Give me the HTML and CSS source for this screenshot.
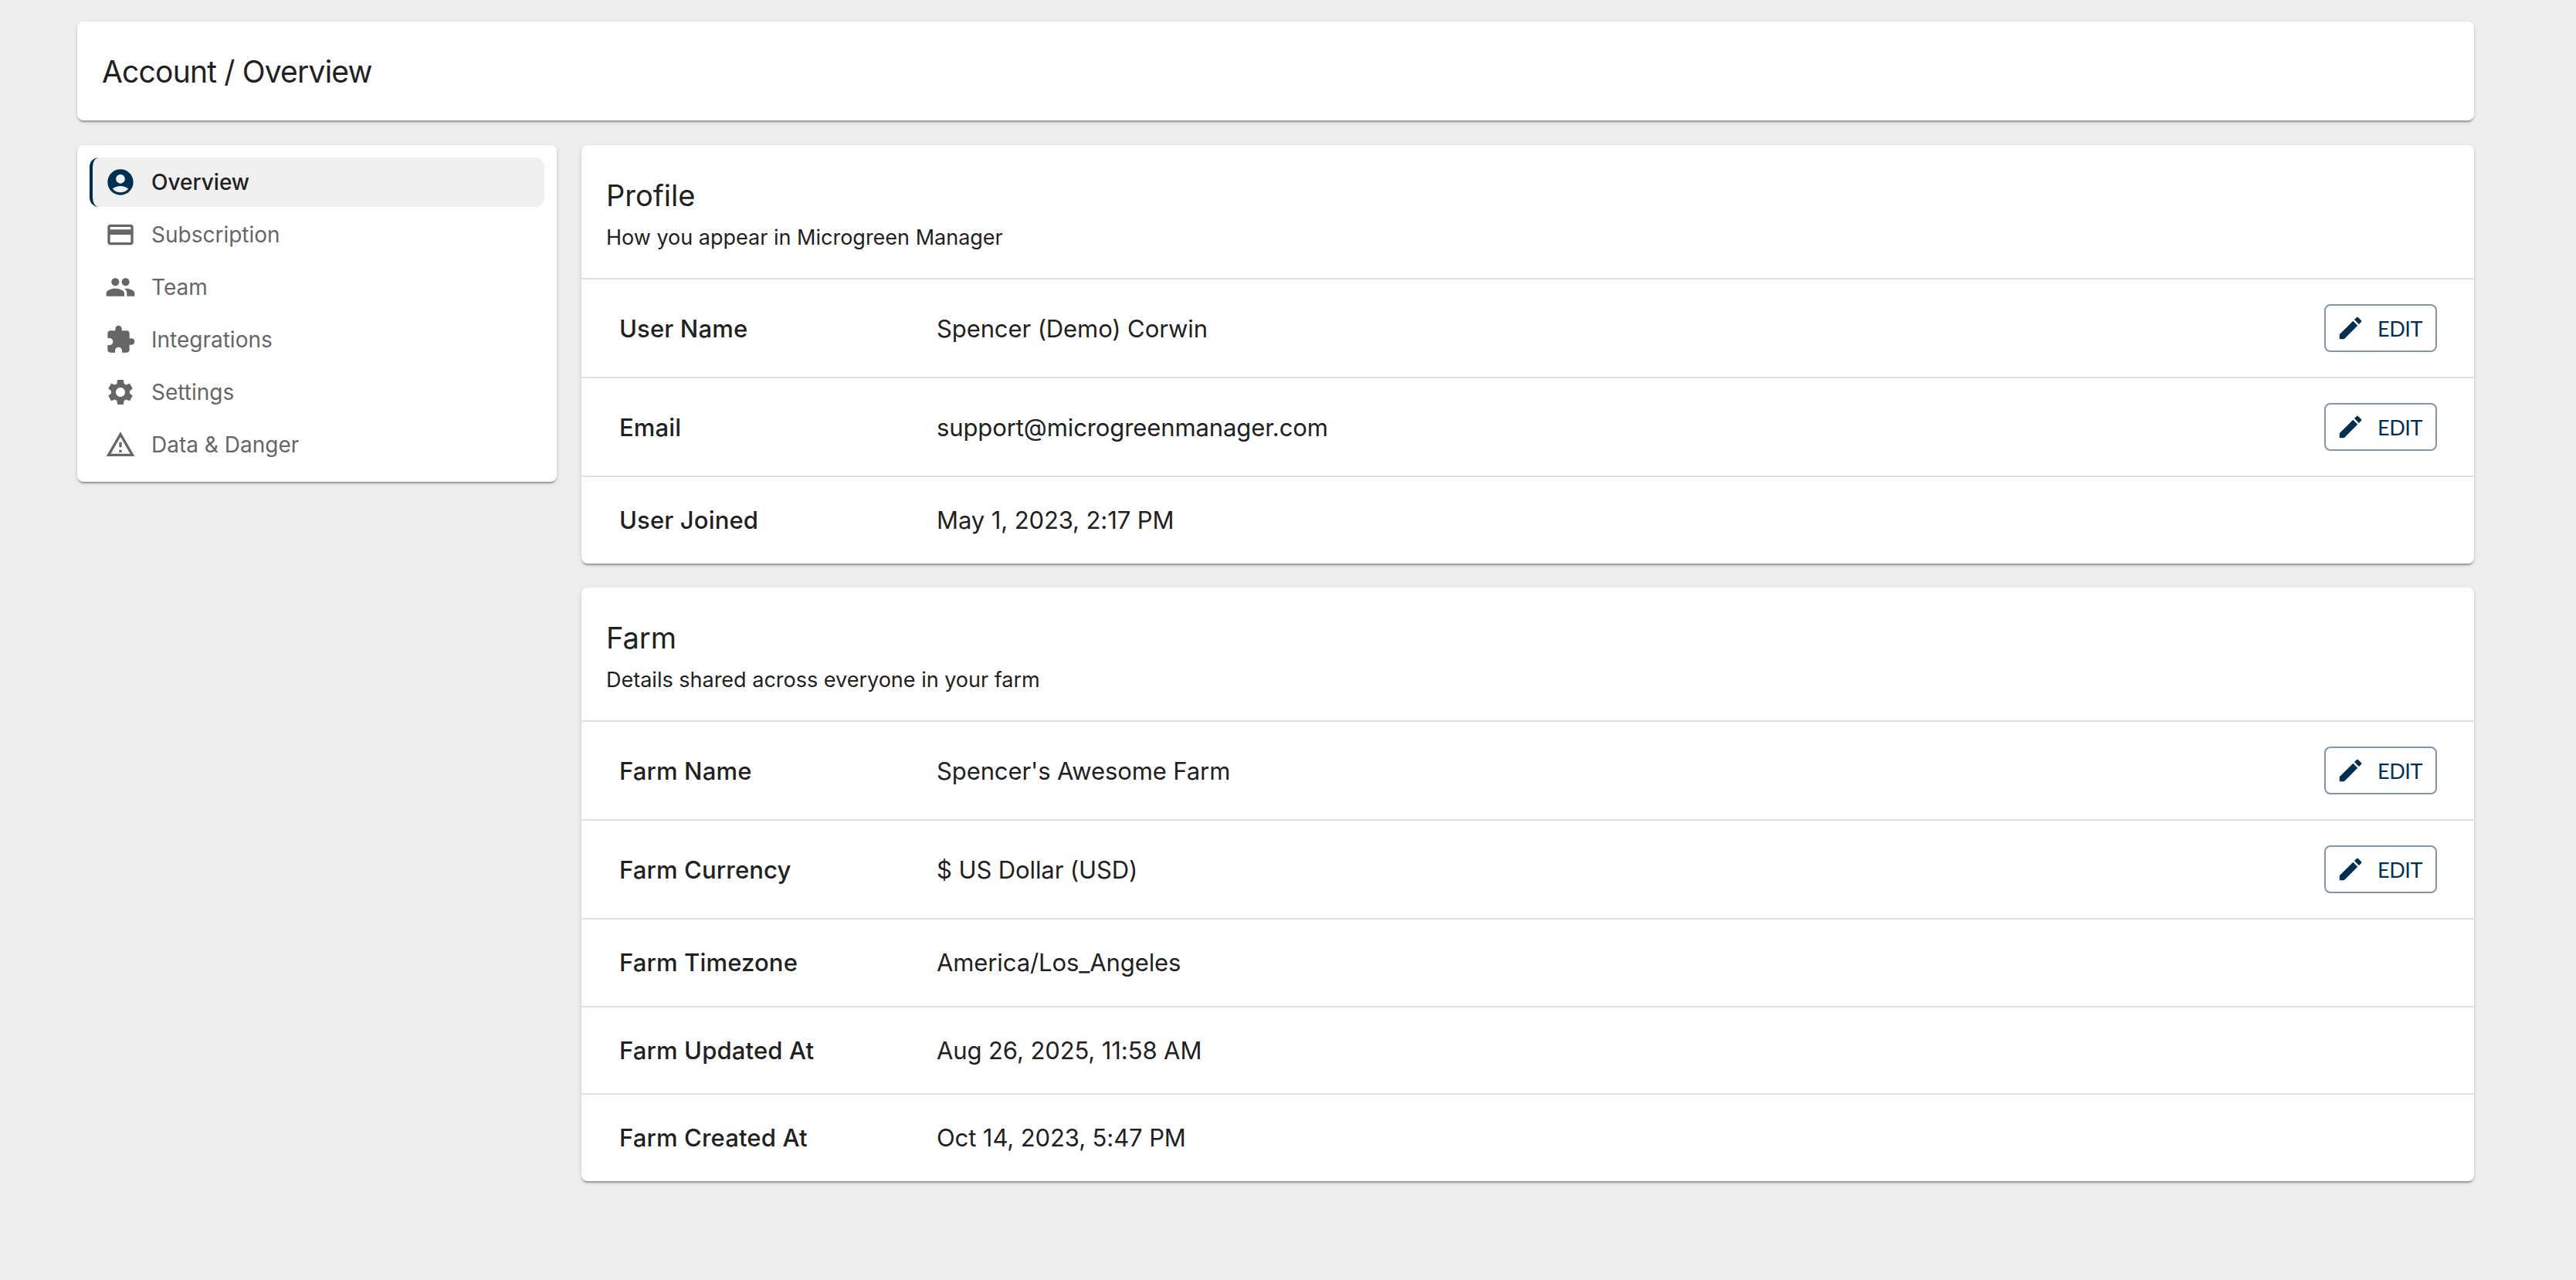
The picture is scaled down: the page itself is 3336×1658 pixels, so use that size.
FILE: index.html
```html
<!DOCTYPE html>
<html lang="en">
  <head>
    <meta charset="UTF-8" />
    <title>Account / Overview</title>
    <link rel="stylesheet" href="styles.css">
  </head>

  <body>
    <svg class="iconDefs" width="0" height="0">
      <symbol id="editIcon" viewBox="0 0 24 24">
        <path d="M3 17.25V21h3.75L17.81 9.94l-3.75-3.75L3 17.25zM20.71 7.04c.39-.39.39-1.02 0-1.41l-2.34-2.34c-.39-.39-1.02-.39-1.41 0l-1.83 1.83 3.75 3.75 1.83-1.83z" />
      </symbol>
    </svg>

    <header class="card pageTitle">Account / Overview</header>

    <div class="columns">
      <nav class="card sideNav">
        <a class="navItem active" href="javascript:;">
          <svg class="navIcon" viewBox="0 0 24 24"><path d="M12 2C6.48 2 2 6.48 2 12s4.48 10 10 10 10-4.48 10-10S17.52 2 12 2zm0 4c1.93 0 3.5 1.57 3.5 3.5S13.93 13 12 13s-3.5-1.57-3.5-3.5S10.07 6 12 6zm0 14c-2.03 0-4.43-.82-6.14-2.88C7.55 15.8 9.68 15 12 15s4.45.8 6.14 2.12C16.43 19.18 14.03 20 12 20z" /></svg>
          Overview
        </a>
        <a class="navItem" href="javascript:;">
          <svg class="navIcon" viewBox="0 0 24 24"><path d="M20 4H4c-1.11 0-1.99.89-1.99 2L2 18c0 1.11.89 2 2 2h16c1.11 0 2-.89 2-2V6c0-1.11-.89-2-2-2zm0 14H4v-6h16v6zm0-10H4V6h16v2z" /></svg>
          Subscription
        </a>
        <a class="navItem" href="javascript:;">
          <svg class="navIcon" viewBox="0 0 24 24"><path d="M16 11c1.66 0 2.99-1.34 2.99-3S17.66 5 16 5c-1.66 0-3 1.34-3 3s1.34 3 3 3zm-8 0c1.66 0 2.99-1.34 2.99-3S9.66 5 8 5C6.34 5 5 6.34 5 8s1.34 3 3 3zm0 2c-2.33 0-7 1.17-7 3.5V19h14v-2.5c0-2.33-4.67-3.5-7-3.5zm8 0c-.29 0-.62.02-.97.05 1.16.84 1.97 1.97 1.97 3.45V19h6v-2.5c0-2.33-4.67-3.5-7-3.5z" /></svg>
          Team
        </a>
        <a class="navItem" href="javascript:;">
          <svg class="navIcon" viewBox="0 0 24 24"><path d="M20.5 11H19V7c0-1.1-.9-2-2-2h-4V3.5C13 2.12 11.88 1 10.5 1S8 2.12 8 3.5V5H4c-1.1 0-1.99.9-1.99 2v3.8H3.5c1.49 0 2.7 1.21 2.7 2.7s-1.21 2.7-2.7 2.7H2V20c0 1.1.9 2 2 2h3.8v-1.5c0-1.49 1.21-2.7 2.7-2.7 1.49 0 2.7 1.21 2.7 2.7V22H17c1.1 0 2-.9 2-2v-4h1.5c1.38 0 2.5-1.12 2.5-2.5S21.88 11 20.5 11z" /></svg>
          Integrations
        </a>
        <a class="navItem" href="javascript:;">
          <svg class="navIcon" viewBox="0 0 24 24"><path d="M19.14 12.94c.04-.3.06-.61.06-.94 0-.32-.02-.64-.07-.94l2.03-1.58c.18-.14.23-.41.12-.61l-1.92-3.32c-.12-.22-.37-.29-.59-.22l-2.39.96c-.5-.38-1.03-.7-1.62-.94l-.36-2.54c-.04-.24-.24-.41-.48-.41h-3.84c-.24 0-.43.17-.47.41l-.36 2.54c-.59.24-1.13.57-1.62.94l-2.39-.96c-.22-.08-.47 0-.59.22L2.74 8.87c-.12.21-.08.47.12.61l2.03 1.58c-.05.3-.09.63-.09.94s.02.64.07.94l-2.03 1.58c-.18.14-.23.41-.12.61l1.92 3.32c.12.22.37.29.59.22l2.39-.96c.5.38 1.03.7 1.62.94l.36 2.54c.05.24.24.41.48.41h3.84c.24 0 .44-.17.47-.41l.36-2.54c.59-.24 1.13-.56 1.62-.94l2.39.96c.22.08.47 0 .59-.22l1.92-3.32c.12-.22.07-.47-.12-.61l-2.01-1.58zM12 15.6c-1.98 0-3.6-1.62-3.6-3.6s1.62-3.6 3.6-3.6 3.6 1.62 3.6 3.6-1.62 3.6-3.6 3.6z" /></svg>
          Settings
        </a>
        <a class="navItem" href="javascript:;">
          <svg class="navIcon" viewBox="0 0 24 24"><path d="M12 5.99 19.53 19H4.47L12 5.99M12 2 1 21h22L12 2zm1 14h-2v2h2v-2zm0-6h-2v4h2v-4z" /></svg>
          Data &amp; Danger
        </a>
      </nav>

      <main class="mainColumn">
        <section class="card">
          <div class="cardHead">
            <h2 class="cardTitle">Profile</h2>
            <p class="cardSub">How you appear in Microgreen Manager</p>
          </div>
          <div class="infoRow">
            <div class="infoLabel">User Name</div>
            <div class="infoValue">Spencer (Demo) Corwin</div>
            <button class="editBtn"><svg class="editIcon"><use href="#editIcon" /></svg>EDIT</button>
          </div>
          <div class="infoRow">
            <div class="infoLabel">Email</div>
            <div class="infoValue">support@microgreenmanager.com</div>
            <button class="editBtn"><svg class="editIcon"><use href="#editIcon" /></svg>EDIT</button>
          </div>
          <div class="infoRow">
            <div class="infoLabel">User Joined</div>
            <div class="infoValue">May 1, 2023, 2:17 PM</div>
          </div>
        </section>

        <section class="card">
          <div class="cardHead">
            <h2 class="cardTitle">Farm</h2>
            <p class="cardSub">Details shared across everyone in your farm</p>
          </div>
          <div class="infoRow">
            <div class="infoLabel">Farm Name</div>
            <div class="infoValue">Spencer's Awesome Farm</div>
            <button class="editBtn"><svg class="editIcon"><use href="#editIcon" /></svg>EDIT</button>
          </div>
          <div class="infoRow">
            <div class="infoLabel">Farm Currency</div>
            <div class="infoValue">$ US Dollar (USD)</div>
            <button class="editBtn"><svg class="editIcon"><use href="#editIcon" /></svg>EDIT</button>
          </div>
          <div class="infoRow">
            <div class="infoLabel">Farm Timezone</div>
            <div class="infoValue">America/Los_Angeles</div>
          </div>
          <div class="infoRow">
            <div class="infoLabel">Farm Updated At</div>
            <div class="infoValue">Aug 26, 2025, 11:58 AM</div>
          </div>
          <div class="infoRow">
            <div class="infoLabel">Farm Created At</div>
            <div class="infoValue">Oct 14, 2023, 5:47 PM</div>
          </div>
        </section>
      </main>
    </div>
  </body>
</html>
```

FILE: styles.css
```css
* {
  box-sizing: border-box;
}

body {
  margin: 0;
  padding: 28px 132px 60px 100px;
  background: #eeeeee;
  color: #212121;
  font-family: Inter, "Liberation Sans", sans-serif;
}

.iconDefs {
  position: absolute;
}

.card {
  background: #ffffff;
  border-radius: 8px;
  box-shadow: 0px 4px 2px -2px rgba(0, 0, 0, 0.2), 0px 2px 2px 0px rgba(0, 0, 0, 0.14), 0px 2px 6px 0px rgba(0, 0, 0, 0.12);
}

.pageTitle {
  display: flex;
  align-items: center;
  height: 128px;
  padding-left: 32px;
  font-size: 39px;
  letter-spacing: -0.8px;
}

.columns {
  display: flex;
  align-items: flex-start;
  gap: 32px;
  margin-top: 32px;
}

/* left menu */
.sideNav {
  display: flex;
  flex-direction: column;
  gap: 4px;
  flex: 0 0 621px;
  padding: 16px;
}

.navItem {
  display: flex;
  align-items: center;
  gap: 20px;
  height: 64px;
  padding-left: 16px;
  border-left: 4px solid transparent;
  border-radius: 12px;
  color: #666666;
  font-size: 28px;
  text-decoration: none;
}

.navItem.active {
  border-left-color: #002f54;
  background: #f0f0f0;
  color: #212121;
  font-weight: 500;
}

.navIcon {
  flex: none;
  width: 40px;
  height: 40px;
  fill: #666666;
}

.active .navIcon {
  fill: #002f54;
}

/* right cards */
.mainColumn {
  display: flex;
  flex-direction: column;
  flex: 1;
  gap: 31.5px;
  min-width: 0;
}

.cardHead {
  height: 172px;
  padding: 41px 32px 0;
}

.cardTitle {
  margin: 0;
  font-size: 38px;
  font-weight: 400;
  line-height: 48px;
}

.cardSub {
  margin: 11px 0 0;
  font-size: 27px;
  line-height: 40px;
}

.infoRow {
  display: flex;
  align-items: center;
  min-height: 113.5px;
  padding: 32px 48px 32px 49px;
  border-top: 2px solid #e0e0e0;
}

.infoLabel {
  flex: 0 0 411px;
  font-size: 31px;
  font-weight: 450;
  letter-spacing: 0.15px;
}

.infoValue {
  flex: 1;
  font-size: 31px;
  letter-spacing: -0.1px;
}

.editBtn {
  display: flex;
  align-items: center;
  gap: 16px;
  width: 146px;
  height: 62px;
  padding: 0 0 0 13px;
  border: 2px solid #7f97aa;
  border-radius: 8px;
  background: #ffffff;
  color: #002f54;
  font-family: Lato, sans-serif;
  font-size: 27px;
  letter-spacing: -0.4px;
  cursor: pointer;
}

.editIcon {
  flex: none;
  width: 38px;
  height: 38px;
  fill: #002f54;
}
```
